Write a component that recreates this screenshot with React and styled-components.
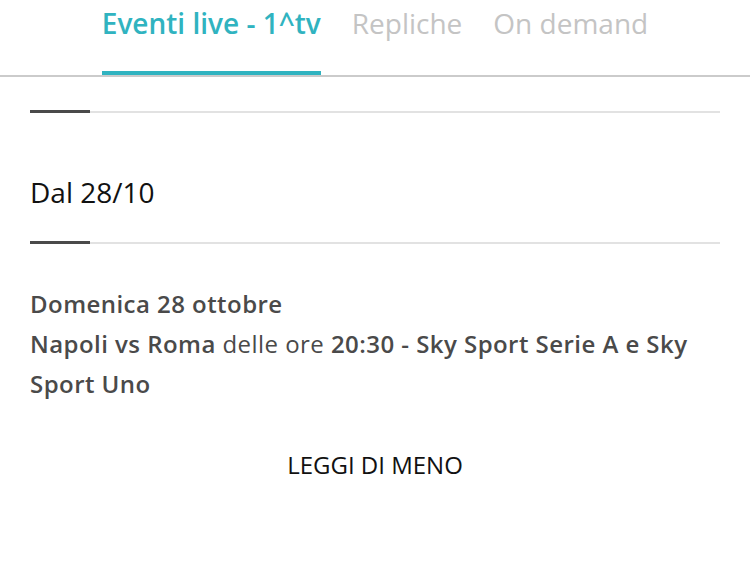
import React from "react";
import styled, { createGlobalStyle } from "styled-components";

const Global = createGlobalStyle`
  body {
    margin: 0;
    background: #fff;
    font-family: "Open Sans", "Noto Sans", sans-serif;
  }
`;

const Page = styled.div`
  width: 750px;
  height: 567px;
  overflow: hidden;
`;

const TabBar = styled.nav`
  display: flex;
  justify-content: center;
  gap: 31px;
  border-bottom: 2px solid #cbcbcb;
  height: 77px;
  box-sizing: border-box;
`;

const Tab = styled.div`
  font-size: 28px;
  line-height: 1;
  padding-top: 9px;
  color: ${p => (p.$active ? "#30b3c0" : "#c4c4c4")};
  font-weight: ${p => (p.$active ? 600 : 400)};
  border-bottom: 4px solid ${p => (p.$active ? "#30b3c0" : "transparent")};
  box-sizing: border-box;
  height: 75px;
  white-space: nowrap;
`;

const Body = styled.div`
  padding: 34px 30px 0;
`;

const Rule = styled.div`
  position: relative;
  height: 2px;
  background: #e2e2e2;
  &:before {
    content: "";
    position: absolute;
    left: 0;
    top: -1px;
    width: 60px;
    height: 3px;
    background: #4a4a4a;
  }
`;

const Heading = styled.h2`
  margin: 0;
  padding: 65px 0 36px;
  font-size: 28px;
  line-height: 28px;
  font-weight: 400;
  color: #111;
`;

const Info = styled.p`
  margin: 40px 0 0;
  font-size: 24px;
  line-height: 40px;
  letter-spacing: 0.45px;
  color: #4a4a4a;
  font-weight: 400;
  b {
    font-weight: 600;
  }
`;

const Toggle = styled.button`
  display: block;
  margin: 44px auto 0;
  border: 0;
  background: none;
  font-family: inherit;
  font-size: 24px;
  color: #111;
  cursor: pointer;
  padding: 0;
`;

export default function App() {
  return (
    <Page>
      <Global />
      <TabBar>
        <Tab $active>Eventi live - 1^tv</Tab>
        <Tab>Repliche</Tab>
        <Tab>On demand</Tab>
      </TabBar>
      <Body>
        <Rule />
        <Heading>Dal 28/10</Heading>
        <Rule />
        <Info>
          <b>Domenica 28 ottobre</b>
          <br />
          <b>Napoli vs Roma</b> delle ore <b>20:30 - Sky Sport Serie A e Sky Sport Uno</b>
        </Info>
        <Toggle>LEGGI DI MENO</Toggle>
      </Body>
    </Page>
  );
}
